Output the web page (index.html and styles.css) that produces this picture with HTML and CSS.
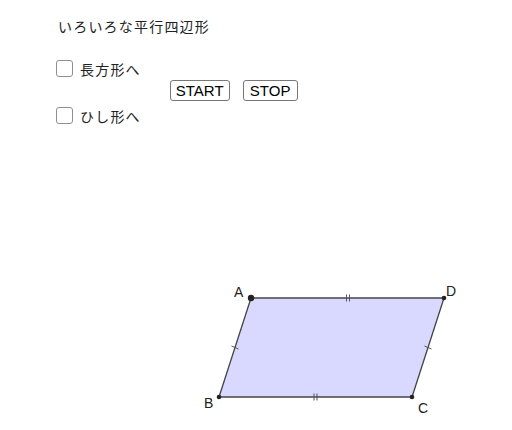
FILE: index.html
```html
<!DOCTYPE html>
<html lang="ja">
<head>
    <meta charset="UTF-8">
    <meta name="viewport" content="width=device-width, initial-scale=1.0">
    <title>いろいろな平行四辺形</title>
    <link rel="stylesheet" href="styles.css">
</head>
<body>
<div class="panel">
    <div class="title">いろいろな平行四辺形</div>
    <div class="controls">
        <div class="checks">
            <label class="check"><span class="box"></span><span class="jp">長方形へ</span></label>
            <label class="check"><span class="box"></span><span class="jp">ひし形へ</span></label>
        </div>
        <div class="btns">
            <button class="btn">START</button>
            <button class="btn">STOP</button>
        </div>
    </div>
</div>
<!-- 平行四辺形ABCD -->
<svg class="figure" width="512" height="170" viewBox="0 260 512 170">
    <polygon points="251,298 444,298 412,397 219,397" fill="#d9d9ff" stroke="none"/>
    <g stroke="#444" stroke-width="1.3" fill="none">
        <line x1="251" y1="298" x2="444" y2="298"/>
        <line x1="444" y1="298" x2="412" y2="397"/>
        <line x1="412" y1="397" x2="219" y2="397"/>
        <line x1="219" y1="397" x2="251" y2="298"/>
    </g>
    <!-- 等しい辺のしるし -->
    <g stroke="#555" stroke-width="1">
        <line x1="346.5" y1="294.5" x2="346.5" y2="301.5"/>
        <line x1="349.5" y1="294.5" x2="349.5" y2="301.5"/>
        <line x1="314" y1="393.5" x2="314" y2="400.5"/>
        <line x1="317" y1="393.5" x2="317" y2="400.5"/>
        <line x1="231.5" y1="346" x2="238.5" y2="349"/>
        <line x1="424.5" y1="346" x2="431.5" y2="349"/>
    </g>
    <g fill="#222">
        <circle cx="251" cy="298" r="3.2"/>
        <circle cx="444" cy="298" r="2.3"/>
        <circle cx="412" cy="397" r="2.3"/>
        <circle cx="219" cy="397" r="2.3"/>
    </g>
    <g class="lbl">
        <text x="234" y="297">A</text>
        <text x="446" y="296">D</text>
        <text x="204" y="408">B</text>
        <text x="418" y="413">C</text>
    </g>
</svg>
</body>
</html>
```
FILE: styles.css
```css
body{
    margin: 0;
    background-color: #fff;
    color: #222;
    font-family: "Noto Sans CJK JP", "Noto Sans", sans-serif;
}
.panel{
    height: 260px;
    padding: 15px 0 0 56px;
    box-sizing: border-box;
}
.title{
    font-size: 14px;
    line-height: 22px;
    letter-spacing: 1.2px;
    margin-left: 2px;
}
.controls{
    display: flex;
    margin-top: 23px;
}
.checks{
    display: flex;
    flex-direction: column;
    gap: 30px;
}
.check{
    display: flex;
    align-items: center;
    gap: 7px;
    height: 17px;
}
.box{
    width: 17px;
    height: 17px;
    box-sizing: border-box;
    border: 1px solid #8f8f8f;
    border-radius: 3px;
    background-color: #fff;
}
.jp{
    font-size: 14px;
    letter-spacing: 1.2px;
}
.btns{
    display: flex;
    gap: 13px;
    margin: 20px 0 0 29px;
    align-self: flex-start;
}
.btn{
    font-family: "Liberation Sans", Arial, sans-serif;
    font-size: 15px;
    height: 21px;
    min-width: 55px;
    padding: 0 5px;
    color: #000;
    background-color: #fff;
    border: 1px solid #777;
    border-radius: 3px;
}
.figure{
    display: block;
}
.lbl{
    font-family: "Liberation Sans", Arial, sans-serif;
    font-size: 14px;
    fill: #222;
}
```
